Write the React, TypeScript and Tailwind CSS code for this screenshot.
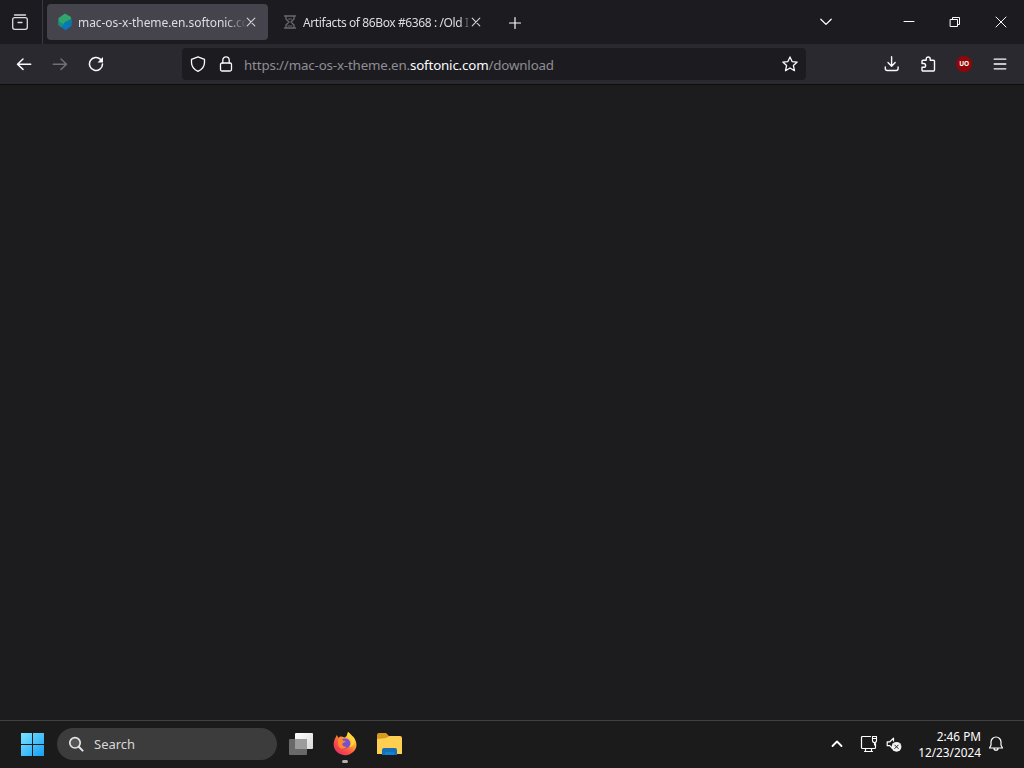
import type { ReactNode } from 'react'

function Icon({ size = 16, className = '', children }: { size?: number; className?: string; children: ReactNode }) {
  return (
    <svg
      width={size}
      height={size}
      viewBox={`0 0 ${size} ${size}`}
      fill="none"
      stroke="currentColor"
      strokeWidth="1.3"
      strokeLinecap="round"
      strokeLinejoin="round"
      className={`shrink-0 ${className}`}
    >
      {children}
    </svg>
  )
}

function CloseIcon() {
  return (
    <Icon size={10} className="text-[#d4d3da]">
      <path d="M1.2 1.2l7.6 7.6M8.8 1.2L1.2 8.8" strokeWidth="1.1" />
    </Icon>
  )
}

function TabStrip() {
  return (
    <div className="flex h-11 items-center bg-[#1c1b20] text-[#fbfbfe]">
      <div className="flex h-full w-[43px] items-center justify-center border-r border-[#3a393f] pr-0.5">
        <Icon size={18} className="text-[#dcdbe0]">
          <path d="M3.5 2h11" />
          <rect x="1.7" y="4.7" width="14.6" height="11.6" rx="2" />
          <path d="M7 9.5h4" />
        </Icon>
      </div>

      <div className="ml-1 flex h-9 w-[221px] items-center rounded bg-[#45444d] pl-2.5 pr-3">
        <svg width="16" height="18" viewBox="0 0 16 18" className="shrink-0">
          <path d="M8 .5L14 4v3L8 10.5 4.5 14 1.5 12V5z" fill="#32a56c" />
          <path d="M14.5 6v7L8.5 17.3 4 14l4-5z" fill="#0878bd" />
          <path d="M1.5 8L7 11.5 4.5 14.2 1.5 12z" fill="#168e87" />
          <path d="M14.5 6L8 9.2l3 2.5 3.5-2z" fill="#087f99" />
        </svg>
        <span className="ml-[5px] w-[168px] shrink-0 whitespace-nowrap pt-0.5 text-[12px] tracking-[-0.07px] text-[#dddce1] [mask-image:linear-gradient(to_right,black_148px,transparent_169px)]">
          mac-os-x-theme.en.softonic.co
        </span>
        <CloseIcon />
      </div>

      <div className="ml-2 flex h-9 w-[209px] items-center pl-[7px]">
        <Icon size={14} className="text-[#6a696e]">
          <path d="M1.5 1h11M1.5 13h11M3 1v3l3 3-3 3v3M11 1v3L8 7l3 3v3" strokeWidth="1.3" />
          <path d="M5.5 4h3M5 11h4" strokeWidth="1" />
        </Icon>
        <span className="ml-1.5 w-[168px] shrink-0 whitespace-nowrap pt-0.5 text-[12px] tracking-[-0.39px] text-[#dddce1] [mask-image:linear-gradient(to_right,black_157px,transparent_168px)]">
          Artifacts of 86Box #6368 : /Old I
        </span>
        <CloseIcon />
      </div>

      <div className="flex w-[60px] justify-center pt-0.5">
        <Icon size={14}>
          <path d="M7 1.5v11M1.5 7h11" strokeWidth="1.2" />
        </Icon>
      </div>

      <div className="ml-auto flex items-center">
        <div className="flex w-[60px] justify-center">
          <Icon size={14}>
            <path d="M1.8 4.2L7 9.4l5.2-5.2" />
          </Icon>
        </div>
        <div className="ml-[30px] flex w-[46px] justify-center">
          <Icon size={12}>
            <path d="M1 5.5h10" strokeWidth="1" />
          </Icon>
        </div>
        <div className="flex w-[46px] justify-center">
          <Icon size={12}>
            <path d="M1.5 3.5h7v7h-7zM3.5 3.5v-2h7v7h-2" strokeWidth="1" />
          </Icon>
        </div>
        <div className="flex w-[46px] justify-center">
          <Icon size={12}>
            <path d="M1 1l10 10M11 1L1 11" strokeWidth="1" />
          </Icon>
        </div>
      </div>
    </div>
  )
}

function NavBar() {
  return (
    <div className="flex h-10 items-center bg-[#2a2930] pl-1.5 text-[#fbfbfe]">
      <div className="flex w-9 justify-center">
        <Icon>
          <path d="M7 3L1.5 8.2 7 13.4M1.5 8.2h13.2" strokeWidth="1.5" />
        </Icon>
      </div>
      <div className="flex w-9 justify-center">
        <Icon className="text-[#716f78]">
          <path d="M9 3l5.5 5.2L9 13.4M14.5 8.2H1.3" strokeWidth="1.5" />
        </Icon>
      </div>
      <div className="flex w-9 justify-center">
        <Icon>
          <path d="M12.6 3.4A6.5 6.5 0 1 0 14.5 8" strokeWidth="1.5" />
          <path d="M15 1v5.5H9.5z" fill="currentColor" stroke="none" />
        </Icon>
      </div>

      <div className="ml-[68px] flex h-8 w-[624px] items-center rounded bg-[#1c1b20] pl-2 pr-2">
        <Icon>
          <path d="M8 .8l6.5 2.5v3.2c0 4-2.5 7-6.5 8.8-4-1.8-6.5-4.8-6.5-8.8V3.3z" />
        </Icon>
        <Icon className="ml-3">
          <rect x="2.5" y="7" width="11" height="8" rx="1.5" />
          <path d="M4.8 7V4a3.2 3.2 0 0 1 6.4 0v3" />
        </Icon>
        <span className="ml-2.5 whitespace-nowrap pt-[3px] text-[13.33px] tracking-[-0.16px] text-[#8f8e94]">
          https://mac-os-x-theme.en.<span className="text-[#fbfbfe]">softonic.com</span>/download
        </span>
        <Icon className="ml-auto">
          <path d="M8 .9l2.1 4.7 5.1.5-3.8 3.5 1.1 5.1L8 12l-4.5 2.7 1.1-5.1L.8 6.1l5.1-.5z" />
        </Icon>
      </div>

      <div className="ml-auto flex items-center pr-1.5">
        <div className="flex w-9 justify-center">
          <Icon>
            <path d="M7.6.8v9.4M4 6.6l3.6 3.6 3.6-3.6M1.3 11v1.5a2 2 0 0 0 2 2h8.8a2 2 0 0 0 2-2V11" strokeWidth="1.4" />
          </Icon>
        </div>
        <div className="flex w-9 justify-center">
          <Icon>
            <path d="M2 7.5V5.3a1 1 0 0 1 1-1h3.2V3a2 2 0 0 1 4 0v1.3h3.3a1 1 0 0 1 1 1V14a1 1 0 0 1-1 1H3a1 1 0 0 1-1-1v-2.7h1.7a1.9 1.9 0 0 0 0-3.8z" strokeWidth="1.4" />
          </Icon>
        </div>
        <div className="flex w-9 justify-center">
          <div className="flex size-4 items-center justify-center rounded-full bg-[#900609] text-[6.5px] font-bold leading-none tracking-tighter text-white">
            UO
          </div>
        </div>
        <div className="flex w-9 justify-center">
          <Icon>
            <path d="M2.2 3.2h11.6M2.2 8h11.6M2.2 12.8h11.6" />
          </Icon>
        </div>
      </div>
    </div>
  )
}

function Firefox() {
  return (
    <svg width="24" height="25" viewBox="0 0 24 25" className="shrink-0">
      <defs>
        <linearGradient id="fox" x1="1" y1="0" x2=".2" y2="1">
          <stop offset="0" stopColor="#fff04d" />
          <stop offset=".35" stopColor="#ffb52e" />
          <stop offset=".65" stopColor="#ff593f" />
          <stop offset="1" stopColor="#e52a66" />
        </linearGradient>
      </defs>
      <path d="M15 1c3 2 4 4 5.5 5 4 5 3.8 11 .2 14.5A12 12 0 0 1 3 20C-.2 16 .1 10.5 2.6 6.5L3.8 4l1.7 3C7 5 9.2 5.3 11 6.5c1.4 0 3.3-1.4 4-5.5z" fill="url(#fox)" />
      <circle cx="12.2" cy="12.4" r="5" fill="#7651d2" />
      <path d="M5 8.3c2.2-.6 4 .1 5.2 1.4l2.6.3c-1 1.5-2.9 1.5-3.4 2.8-.5 2 2 3.6 4.6 2.8-2.5 3-8.2 2.7-9-2.2z" fill="#ff8b2e" />
      <path d="M15 1c-1.5 4-.3 5.4 2 7.4 2.2 2.3 1.2 6-1.2 8.2 5-.8 7-5.3 5.2-9.5C18.8 5.5 17.5 3 15 1z" fill="#ffd53e" />
    </svg>
  )
}

function TaskBar() {
  return (
    <div className="flex h-12 items-center border-t border-[#414141] bg-[#1b1b1b] pb-px pl-[21px] text-white">
      <svg width="23" height="23" viewBox="0 0 23 23" className="shrink-0">
        <defs>
          <linearGradient id="win" x1="0" y1="0" x2="1" y2="1">
            <stop offset="0" stopColor="#7ce5ff" />
            <stop offset="1" stopColor="#149ff5" />
          </linearGradient>
        </defs>
        <path d="M0 0h11v11H0zM12 0h11v11H12zM0 12h11v11H0zM12 12h11v11H12z" fill="url(#win)" />
      </svg>

      <div className="ml-[13px] flex h-8 w-[220px] items-center rounded-full bg-[#3c3c3c] pl-[11px]">
        <Icon className="text-[#e4e4e4]">
          <circle cx="7" cy="6.8" r="5.2" strokeWidth="1.7" fill="#555" />
          <path d="M10.8 10.8l3.8 3.8" strokeWidth="2" />
        </Icon>
        <span className="ml-2.5 pt-px text-[13px] text-[#d8d8d8]">Search</span>
      </div>

      <svg width="24" height="22" viewBox="0 0 24 22" className="ml-3 shrink-0">
        <defs>
          <linearGradient id="desk" x1="0" y1="0" x2="1" y2="1">
            <stop offset="0" stopColor="#fff" />
            <stop offset="1" stopColor="#d7d7d7" />
          </linearGradient>
        </defs>
        <rect y="6" width="18" height="16" rx="1" fill="#696969" />
        <rect x="6" width="18" height="16" rx="1" fill="url(#desk)" />
        <path d="M6 6h12v10H6z" fill="#9c9c9c" />
      </svg>

      <div className="ml-5 flex h-full w-6 flex-col items-center pt-[10px]">
        <Firefox />
        <div className="mt-1 h-[3px] w-1.5 shrink-0 rounded-full bg-[#b0b0b0]" />
      </div>

      <svg width="25" height="22" viewBox="0 0 25 22" className="ml-5 shrink-0">
        <path d="M0 2a2 2 0 0 1 2-2h7l3 3-3 3H0z" fill="#d99b1c" />
        <path d="M0 6l9-1 3-2h11a2 2 0 0 1 2 2v16H0z" fill="#ffcf52" />
        <path d="M5 21v-4a2 2 0 0 1 2-2h11a2 2 0 0 1 2 2v5H5z" fill="#176fb6" />
        <path d="M8 19h9v3H8z" fill="#1282d8" />
      </svg>

      <div className="ml-auto flex items-center pr-5">
        <Icon size={12}>
          <path d="M1.5 8L6 3.5 10.5 8" strokeWidth="1.8" />
        </Icon>
        <Icon size={18} className="ml-[17px]">
          <path d="M10.5 1.5h-8a1 1 0 0 0-1 1v10a1 1 0 0 0 1 1h12a1 1 0 0 0 1-1V8.5M5.5 14v2.5M11.5 14v2.5M4.5 16.5h8" strokeWidth="1.2" />
          <path d="M12.5 1.5h4v4a2 2 0 0 1-4 0zM12.5 3.5h4M14.5 7.5V10" strokeWidth="1.1" />
        </Icon>
        <Icon size={16} className="ml-2">
          <path d="M6 12L3.8 9.7H1.2V5.8h2.6L7.5 2.2V5" strokeWidth="1.2" />
          <circle cx="10.5" cy="10.8" r="4.9" fill="#f3f3f3" stroke="none" />
          <path d="M8.8 9.1l3.4 3.4M12.2 9.1l-3.4 3.4" stroke="#222" strokeWidth="1" />
        </Icon>
        <div className="ml-4 whitespace-nowrap text-right text-[11.8px] leading-4">
          <div>2:46 PM</div>
          <div>12/23/2024</div>
        </div>
        <Icon className="ml-[7px]">
          <path d="M1.5 12L3 9.2V6a5 5 0 0 1 10 0v3.2l1.5 2.8zM6 12.2a2 2 0 0 0 4 0" strokeWidth="1.2" />
        </Icon>
      </div>
    </div>
  )
}

export default function App() {
  return (
    <div className="flex h-screen w-full flex-col overflow-hidden bg-[#1c1b1e] font-['Noto_Sans','Open_Sans',sans-serif]">
      <TabStrip />
      <NavBar />
      <main className="flex-1 border-t border-[#0c0c0e] bg-[#1c1b1e]" />
      <TaskBar />
    </div>
  )
}
